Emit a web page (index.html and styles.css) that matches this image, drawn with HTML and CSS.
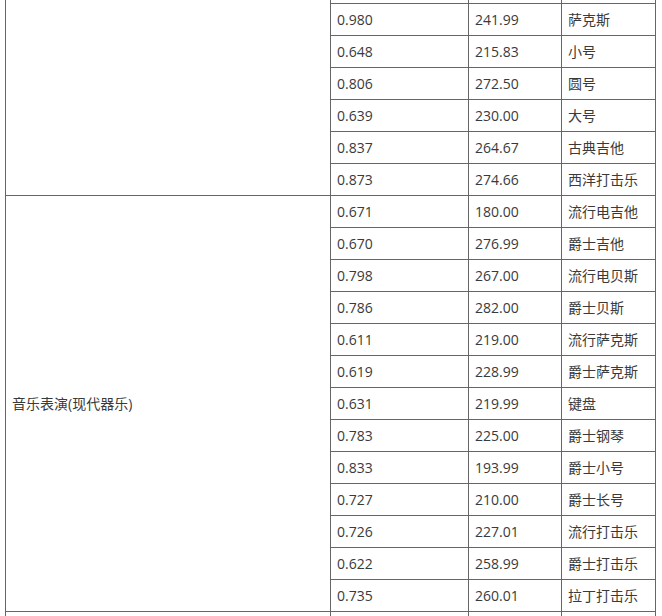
FILE: index.html
```html
<!DOCTYPE html>
<html lang="zh-CN">
<head>
<meta charset="utf-8">
<title>表格</title>
<link rel="stylesheet" href="styles.css">
</head>
<body>
<table class="tbl">
  <colgroup>
    <col class="c1"><col class="c2"><col class="c3"><col class="c4">
  </colgroup>
  <tbody>
    <tr class="cut"><td rowspan="7" class="group cut-cell"></td><td></td><td></td><td></td></tr>
    <tr><td>0.980</td><td>241.99</td><td>萨克斯</td></tr>
    <tr><td>0.648</td><td>215.83</td><td>小号</td></tr>
    <tr><td>0.806</td><td>272.50</td><td>圆号</td></tr>
    <tr><td>0.639</td><td>230.00</td><td>大号</td></tr>
    <tr><td>0.837</td><td>264.67</td><td>古典吉他</td></tr>
    <tr><td>0.873</td><td>274.66</td><td>西洋打击乐</td></tr>
    <tr><td rowspan="13" class="group">音乐表演(现代器乐)</td><td>0.671</td><td>180.00</td><td>流行电吉他</td></tr>
    <tr><td>0.670</td><td>276.99</td><td>爵士吉他</td></tr>
    <tr><td>0.798</td><td>267.00</td><td>流行电贝斯</td></tr>
    <tr><td>0.786</td><td>282.00</td><td>爵士贝斯</td></tr>
    <tr><td>0.611</td><td>219.00</td><td>流行萨克斯</td></tr>
    <tr><td>0.619</td><td>228.99</td><td>爵士萨克斯</td></tr>
    <tr><td>0.631</td><td>219.99</td><td>键盘</td></tr>
    <tr><td>0.783</td><td>225.00</td><td>爵士钢琴</td></tr>
    <tr><td>0.833</td><td>193.99</td><td>爵士小号</td></tr>
    <tr><td>0.727</td><td>210.00</td><td>爵士长号</td></tr>
    <tr><td>0.726</td><td>227.01</td><td>流行打击乐</td></tr>
    <tr><td>0.622</td><td>258.99</td><td>爵士打击乐</td></tr>
    <tr><td>0.735</td><td>260.01</td><td>拉丁打击乐</td></tr>
    <tr><td class="group"></td><td></td><td></td><td></td></tr>
  </tbody>
</table>
</body>
</html>
```

FILE: styles.css
```css
html, body {
  margin: 0;
  padding: 0;
  background: #ffffff;
  overflow: hidden;
}
body {
  padding-left: 5px;
  font-family: "Open Sans", "Noto Sans CJK SC", sans-serif;
  font-size: 14px;
  color: #3a3a3a;
}
.tbl {
  border-collapse: collapse;
  table-layout: fixed;
  width: 650px;
  border-top: none;
}
.c1 { width: 325px; }
.c2 { width: 138px; }
.c3 { width: 93px; }
.c4 { width: 94px; }
.tbl td {
  border: 1px solid #666666;
  padding: 5px 6px;
  line-height: 21px;
  height: 21px;
  vertical-align: middle;
  text-align: left;
  white-space: nowrap;
  overflow: hidden;
}
.tbl tr.cut td {
  border-top: none;
  padding: 0;
  height: 3px;
  line-height: 3px;
}
.tbl td.cut-cell {
  border-top: none;
}
.tbl td.group {
  padding-left: 6px;
}
```
